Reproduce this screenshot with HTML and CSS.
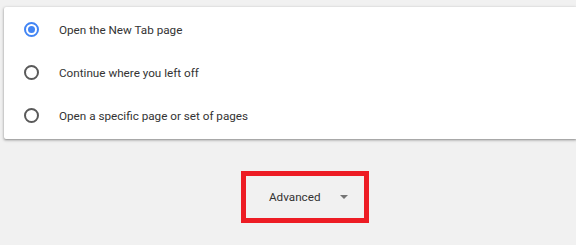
FILE: index.html
```html
<!DOCTYPE html>
<html lang="en">
<head>
    <meta charset="UTF-8">
    <title>On startup</title>
    <link rel="stylesheet" href="styles.css">
</head>
<body>
    <div class="card">
        <label class="row">
            <span class="radio checked"></span>
            <span class="row-label">Open the New Tab page</span>
        </label>
        <label class="row">
            <span class="radio"></span>
            <span class="row-label">Continue where you left off</span>
        </label>
        <label class="row">
            <span class="radio"></span>
            <span class="row-label">Open a specific page or set of pages</span>
        </label>
    </div>

    <div class="advanced-wrap">
        <div class="highlight">
            <button class="advanced">
                <span>Advanced</span>
                <span class="arrow"></span>
            </button>
        </div>
    </div>
</body>
</html>
```

FILE: styles.css
```css
body {
    font-family: Roboto, "Liberation Sans", sans-serif;
    background: #f1f1f1;
    margin: 0;
    overflow: hidden;
    width: 576px;
    height: 245px;
}

.card {
    background: #fff;
    margin: 7px 0 0 4px;
    padding: 1px 0 2px;
    border-radius: 2px 0 0 2px;
    box-shadow: 0 1px 2px rgba(0, 0, 0, 0.3), 0 1px 3px 1px rgba(0, 0, 0, 0.12);
    clip-path: inset(-6px 0 -6px -6px);
}

.row {
    display: flex;
    align-items: center;
    height: 43px;
    padding-left: 20px;
}

.radio {
    width: 11px;
    height: 11px;
    border: 2px solid #5a5a5a;
    border-radius: 50%;
    position: relative;
    flex-shrink: 0;
}

.radio.checked {
    border-color: #4285f4;
}

.radio.checked::after {
    content: "";
    position: absolute;
    left: 2px;
    top: 2px;
    width: 7px;
    height: 7px;
    border-radius: 50%;
    background: #4285f4;
}

.row-label {
    margin-left: 20px;
    font-size: 11.7px;
    color: #333;
}

.advanced-wrap {
    padding: 32px 0 0 241px;
}

.highlight {
    width: 118px;
    height: 42px;
    border: 5px solid #ed1c24;
    display: flex;
    align-items: center;
}

.advanced {
    display: flex;
    align-items: center;
    background: none;
    border: none;
    padding: 0 0 0 23px;
    font-family: inherit;
    font-size: 11.7px;
    color: #333;
    cursor: pointer;
}

.arrow {
    margin-left: 19px;
    width: 0;
    height: 0;
    border-left: 4px solid transparent;
    border-right: 4px solid transparent;
    border-top: 4px solid #757575;
}
```
